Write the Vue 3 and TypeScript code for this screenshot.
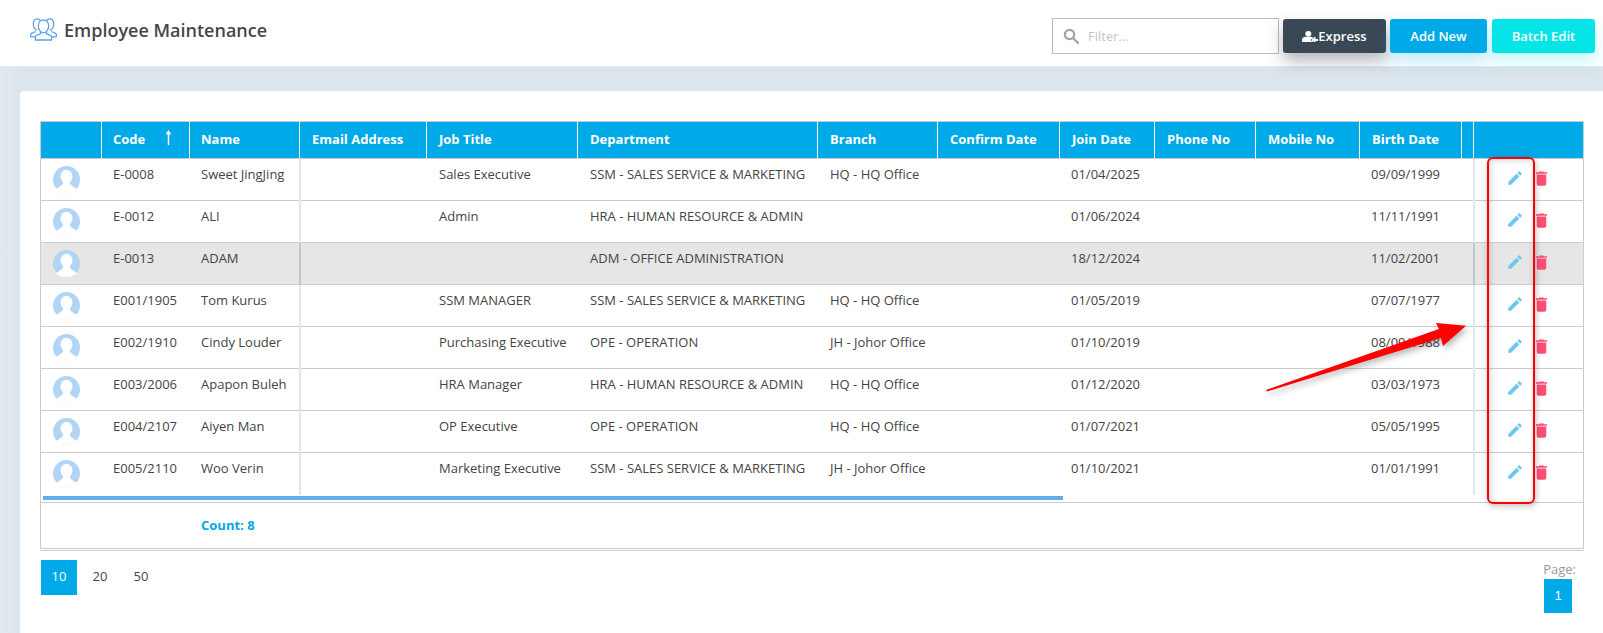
<script setup lang="ts">
interface Emp { code: string; name: string; job: string; dept: string; branch: string; join: string; birth: string; sel?: boolean }
const emps: Emp[] = [
  { code: 'E-0008', name: 'Sweet JingJing', job: 'Sales Executive', dept: 'SSM - SALES SERVICE & MARKETING', branch: 'HQ - HQ Office', join: '01/04/2025', birth: '09/09/1999' },
  { code: 'E-0012', name: 'ALI', job: 'Admin', dept: 'HRA - HUMAN RESOURCE & ADMIN', branch: '', join: '01/06/2024', birth: '11/11/1991' },
  { code: 'E-0013', name: 'ADAM', job: '', dept: 'ADM - OFFICE ADMINISTRATION', branch: '', join: '18/12/2024', birth: '11/02/2001', sel: true },
  { code: 'E001/1905', name: 'Tom Kurus', job: 'SSM MANAGER', dept: 'SSM - SALES SERVICE & MARKETING', branch: 'HQ - HQ Office', join: '01/05/2019', birth: '07/07/1977' },
  { code: 'E002/1910', name: 'Cindy Louder', job: 'Purchasing Executive', dept: 'OPE - OPERATION', branch: 'JH - Johor Office', join: '01/10/2019', birth: '08/09/1988' },
  { code: 'E003/2006', name: 'Apapon Buleh', job: 'HRA Manager', dept: 'HRA - HUMAN RESOURCE & ADMIN', branch: 'HQ - HQ Office', join: '01/12/2020', birth: '03/03/1973' },
  { code: 'E004/2107', name: 'Aiyen Man', job: 'OP Executive', dept: 'OPE - OPERATION', branch: 'HQ - HQ Office', join: '01/07/2021', birth: '05/05/1995' },
  { code: 'E005/2110', name: 'Woo Verin', job: 'Marketing Executive', dept: 'SSM - SALES SERVICE & MARKETING', branch: 'JH - Johor Office', join: '01/10/2021', birth: '01/01/1991' },
]
const heads = ['Email Address', 'Job Title', 'Department', 'Branch', 'Confirm Date', 'Join Date', 'Phone No', 'Mobile No', 'Birth Date']
</script>

<template>
  <div class="page">
    <header class="top">
      <div class="title">
        <svg class="title-icon" viewBox="0 0 27 23" fill="none" stroke="#5aa2e4" stroke-width="1.3" stroke-linejoin="round">
          <path d="M6 13.500c-1.500.5-3 1.100-4.500 1.800-.5.3-.8.7-.8 1.200v2.300h4.800" />
          <path d="M21 13.500c1.500.5 3 1.100 4.500 1.800.5.3.8.7.8 1.200v2.300h-4.800" />
          <path d="M10.500 2.700C9.700 1.400 8.500.8 7.300.8 5 .8 3.300 2.800 3.300 5.800c0 2.800 1.500 5.700 3.700 6.300" />
          <path d="M16.500 2.700C17.300 1.400 18.500.8 19.700.8c2.300 0 4 2 4 5 0 2.800-1.500 5.700-3.700 6.300" />
          <path d="M13.500 2c-3 0-5.200 2.400-5.200 5.800 0 3.500 2.200 7 5.200 7s5.200-3.500 5.200-7c0-3.400-2.200-5.800-5.200-5.800z" />
          <path d="M10.500 14v1.800c-1.600.5-3 1.100-4.200 1.700-.6.3-.9.800-.9 1.400v3.100h16.200v-3.100c0-.6-.3-1.100-.9-1.400-1.200-.6-2.600-1.200-4.200-1.700V14" />
        </svg>
        <span>Employee Maintenance</span>
      </div>
      <div class="tools">
        <div class="filter">
          <svg class="search" viewBox="0 0 16 16" fill="none" stroke="#9fa3a6" stroke-width="2.200">
            <circle cx="6.500" cy="6.500" r="4.700" />
            <path d="M10 10l5 5" stroke-linecap="round" />
          </svg>
          <span>Filter...</span>
        </div>
        <button class="btn dark">
          <svg class="plus-user" viewBox="0 0 16 11" fill="#fff">
            <ellipse cx="6.300" cy="2.800" rx="3" ry="2.800" />
            <path d="M0 11V8.800C0 7 1.800 5.800 3.800 5.800h5c.8 0 1.500.2 2 .6V8h-1.500v2h1.500v1z" />
            <path d="M11.500 6h2v2H16v2h-2.500v1h-2v-1H10V8h1.500z" />
          </svg>Express
        </button>
        <button class="btn blue">Add New</button>
        <button class="btn cyan">Batch Edit</button>
      </div>
    </header>

    <main class="main">
      <section class="card">
        <div class="table">
          <div class="grid head">
            <div class="hc"></div>
            <div class="hc early code-h">Code
              <svg class="sort" viewBox="0 0 7 16" fill="#fff"><path d="M3.500 0L6.500 4.500H4.300V16H2.700V4.500H.5z" /></svg>
            </div>
            <div class="hc early">Name</div>
            <div v-for="h in heads" :key="h" class="hc">{{ h }}</div>
            <div class="hc"></div>
            <div class="hc"></div>
          </div>

          <div v-for="(e, i) in emps" :key="e.code" class="grid row" :class="{ sel: e.sel, last: i === emps.length - 1 }">
            <div class="avatar-cell">
              <svg class="avatar" viewBox="0 0 27 27">
                <circle cx="13.500" cy="13.500" r="13.500" fill="#b2d5f5" />
                <ellipse cx="13.500" cy="10.500" rx="6" ry="6.800" fill="#fff" />
                <path d="M10.300 15c0 2.300-.7 3.800-2.300 4.800L3 23.200C5.500 25.600 9.300 27 13.500 27s8-1.400 10.500-3.800l-5-3.400c-1.600-1-2.300-2.500-2.300-4.800z" fill="#fff" />
              </svg>
            </div>
            <div class="td">{{ e.code }}</div>
            <div class="td">{{ e.name }}</div>
            <div class="td sep"></div>
            <div class="td wide">{{ e.job }}</div>
            <div class="td wide">{{ e.dept }}</div>
            <div class="td wide">{{ e.branch }}</div>
            <div class="td"></div>
            <div class="td">{{ e.join }}</div>
            <div class="td"></div>
            <div class="td"></div>
            <div class="td">{{ e.birth }}</div>
            <div class="td"></div>
            <div class="actions sep">
              <svg class="pencil" viewBox="0 0 24 24" fill="#6cc8f0">
                <path d="M3 17.250V21h3.750L17.810 9.940l-3.750-3.750L3 17.250zM20.710 7.040a1 1 0 000-1.410l-2.340-2.340a1 1 0 00-1.410 0l-1.830 1.830 3.750 3.750 1.830-1.830z" />
              </svg>
              <svg class="trash" viewBox="0 0 24 24" fill="#ff4f72">
                <path d="M6 19c0 1.100.9 2 2 2h8c1.100 0 2-.9 2-2V7H6v12zM19 4h-3.500l-1-1h-5l-1 1H5v2h14V4z" />
              </svg>
            </div>
          </div>

          <div class="scroll"><div class="thumb"></div></div>
          <div class="foot"><span class="count">Count: 8</span></div>
        </div>
        <div class="rule"></div>

        <div class="pager">
          <div class="sizes">
            <span class="size on">10</span>
            <span class="size">20</span>
            <span class="size">50</span>
          </div>
          <div class="pages">
            <div class="page-label">Page:</div>
            <div class="page-no">1</div>
          </div>
        </div>
      </section>
    </main>

    <div class="callout"></div>
    <svg class="arrow" viewBox="0 0 210 75" fill="#fe0000">
      <path d="M3 71L176 10 173 4 203 6.700 180 27 178 19 4 72.500z" />
    </svg>
  </div>
</template>

<style>
html, body { margin: 0; padding: 0; background: #fff; }
</style>

<style scoped>
.page {
  position: relative;
  width: 1603px;
  height: 633px;
  overflow: hidden;
  display: flex;
  flex-direction: column;
  background: linear-gradient(90deg, #e3e9f0, #dce4ec 20px);
  font-family: "Open Sans", "Liberation Sans", sans-serif;
  font-size: 13px;
  color: #444;
}
.top {
  flex: 0 0 67px;
  box-sizing: border-box;
  display: flex;
  justify-content: space-between;
  background: #fff;
  border-bottom: 1px solid #e6eaee;
  padding: 18px 8px 0 30px;
  position: relative;
}
.title {
  display: flex;
  align-items: flex-start;
  gap: 7px;
  font-size: 18px;
  font-weight: 600;
  color: #474747;
  line-height: 24px;
}
.title-icon { width: 27px; height: 23px; }
.tools { display: flex; align-items: flex-start; gap: 5px; }
.filter {
  box-sizing: border-box;
  width: 227px;
  height: 36px;
  border: 1px solid #bbb;
  display: flex;
  align-items: center;
  gap: 9px;
  padding-left: 10px;
  color: #c6c6c6;
  margin-right: -1px;
}
.search { width: 16px; height: 16px; }
.btn {
  box-sizing: border-box;
  height: 34px;
  margin-top: 1px;
  border: 0;
  border-radius: 3px;
  color: #fff;
  font: 600 13px "Open Sans", "Liberation Sans", sans-serif;
  display: flex;
  align-items: center;
  justify-content: center;
}
.dark { width: 103px; margin-right: -1px; background: #3a4856; box-shadow: 0 8px 16px rgba(40, 50, 60, .35); }
.blue { width: 97px; background: #00a9e8; box-shadow: 0 8px 16px rgba(0, 169, 232, .25); }
.cyan { width: 103px; background: #05e5e8; box-shadow: 0 8px 16px rgba(5, 229, 232, .25); }
.plus-user { width: 16px; height: 11px; }

.main { flex: 1; padding: 24px 0 0 20px; min-height: 0; display: flex; }
.card {
  flex: 1;
  box-sizing: border-box;
  background: #fff;
  border-radius: 4px 0 0 0;
  padding: 30px 19px 0 20px;
}
.table { border: 1px solid #ccc; border-bottom: 0; }
.grid {
  display: grid;
  grid-template-columns: 60px 88px 110px 127px 151px 240px 120px 122px 95px 101px 104px 102px 12px 110px;
}
.head {
  height: 37px;
  box-sizing: border-box;
  background: #00a9e8;
  border-bottom: 1px solid #ccc;
}
.hc {
  display: flex;
  align-items: center;
  justify-content: space-between;
  padding: 0 12px 2px;
  color: #fff;
  font-weight: 700;
  border-left: 1px solid #fff;
  white-space: nowrap;
  line-height: 34px;
  box-sizing: border-box;
}
.hc.early { padding-left: 11px; }
.hc:first-child { border-left: 0; }
.code-h { padding-right: 17px; }
.sort { width: 7px; height: 15px; margin-top: -3px; }
.row {
  height: 42px;
  box-sizing: border-box;
  border-bottom: 1px solid #ccc;
}
.row.last { border-bottom: 0; height: 41px; }
.row.sel { background: #e6e6e6; }
.td {
  padding: 6px 0 0 12px;
  line-height: 18px;
  white-space: nowrap;
  color: #444;
}
.td.wide { padding-left: 13px; }
.sep { border-left: 2px solid #e6e6e6; margin-bottom: -1px; }
.td.sep { padding-left: 0; }
.sel .sep { border-left-color: #c6c6c6; }
.avatar-cell { padding: 7px 0 0 12px; }
.avatar { display: block; width: 27px; height: 27px; }
.actions {
  display: flex;
  align-items: flex-start;
  gap: 8px;
  padding: 10px 0 0 31px;
}
.pencil { width: 18px; height: 18px; flex: none; }
.trash { width: 19px; height: 19px; flex: none; }
.scroll {
  height: 9px;
  box-sizing: border-box;
  padding: 2px 0 0 2px;
  border-bottom: 1px solid #ccc;
}
.thumb { width: 1020px; height: 4px; background: #64ace8; }
.foot {
  height: 46px;
  box-sizing: border-box;
  border-bottom: 1px solid #ccc;
  padding: 13px 0 0 160px;
  line-height: 18px;
}
.count { color: #00a9e8; font-weight: 700; }
.rule { height: 0; border-top: 1px solid #ccc; margin-top: 1px; }
.pager { display: flex; justify-content: space-between; padding: 9px 8px 0 1px; }
.sizes { display: flex; gap: 5px; }
.size {
  width: 36px;
  height: 35px;
  line-height: 33px;
  text-align: center;
  color: #444;
}
.size.on { background: #00a9e8; color: #fff; }
.page-label { color: #999; line-height: 18px; }
.page-no {
  width: 28px;
  height: 34px;
  margin: 1px 0 0 1px;
  background: #00a9e8;
  color: #fff;
  text-align: center;
  line-height: 34px;
  font-family: "Liberation Sans", sans-serif;
}
.callout {
  position: absolute;
  left: 1487px;
  top: 157px;
  width: 48px;
  height: 347px;
  box-sizing: border-box;
  border: 2px solid #fe0000;
  border-radius: 6px;
  box-shadow: 1px 2px 6px rgba(0, 0, 0, .25), inset 1px 1px 6px rgba(0, 0, 0, .18);
}
.arrow {
  position: absolute;
  left: 1263px;
  top: 319px;
  width: 210px;
  height: 75px;
  filter: drop-shadow(2px 3px 3px rgba(0, 0, 0, .3));
}
</style>
